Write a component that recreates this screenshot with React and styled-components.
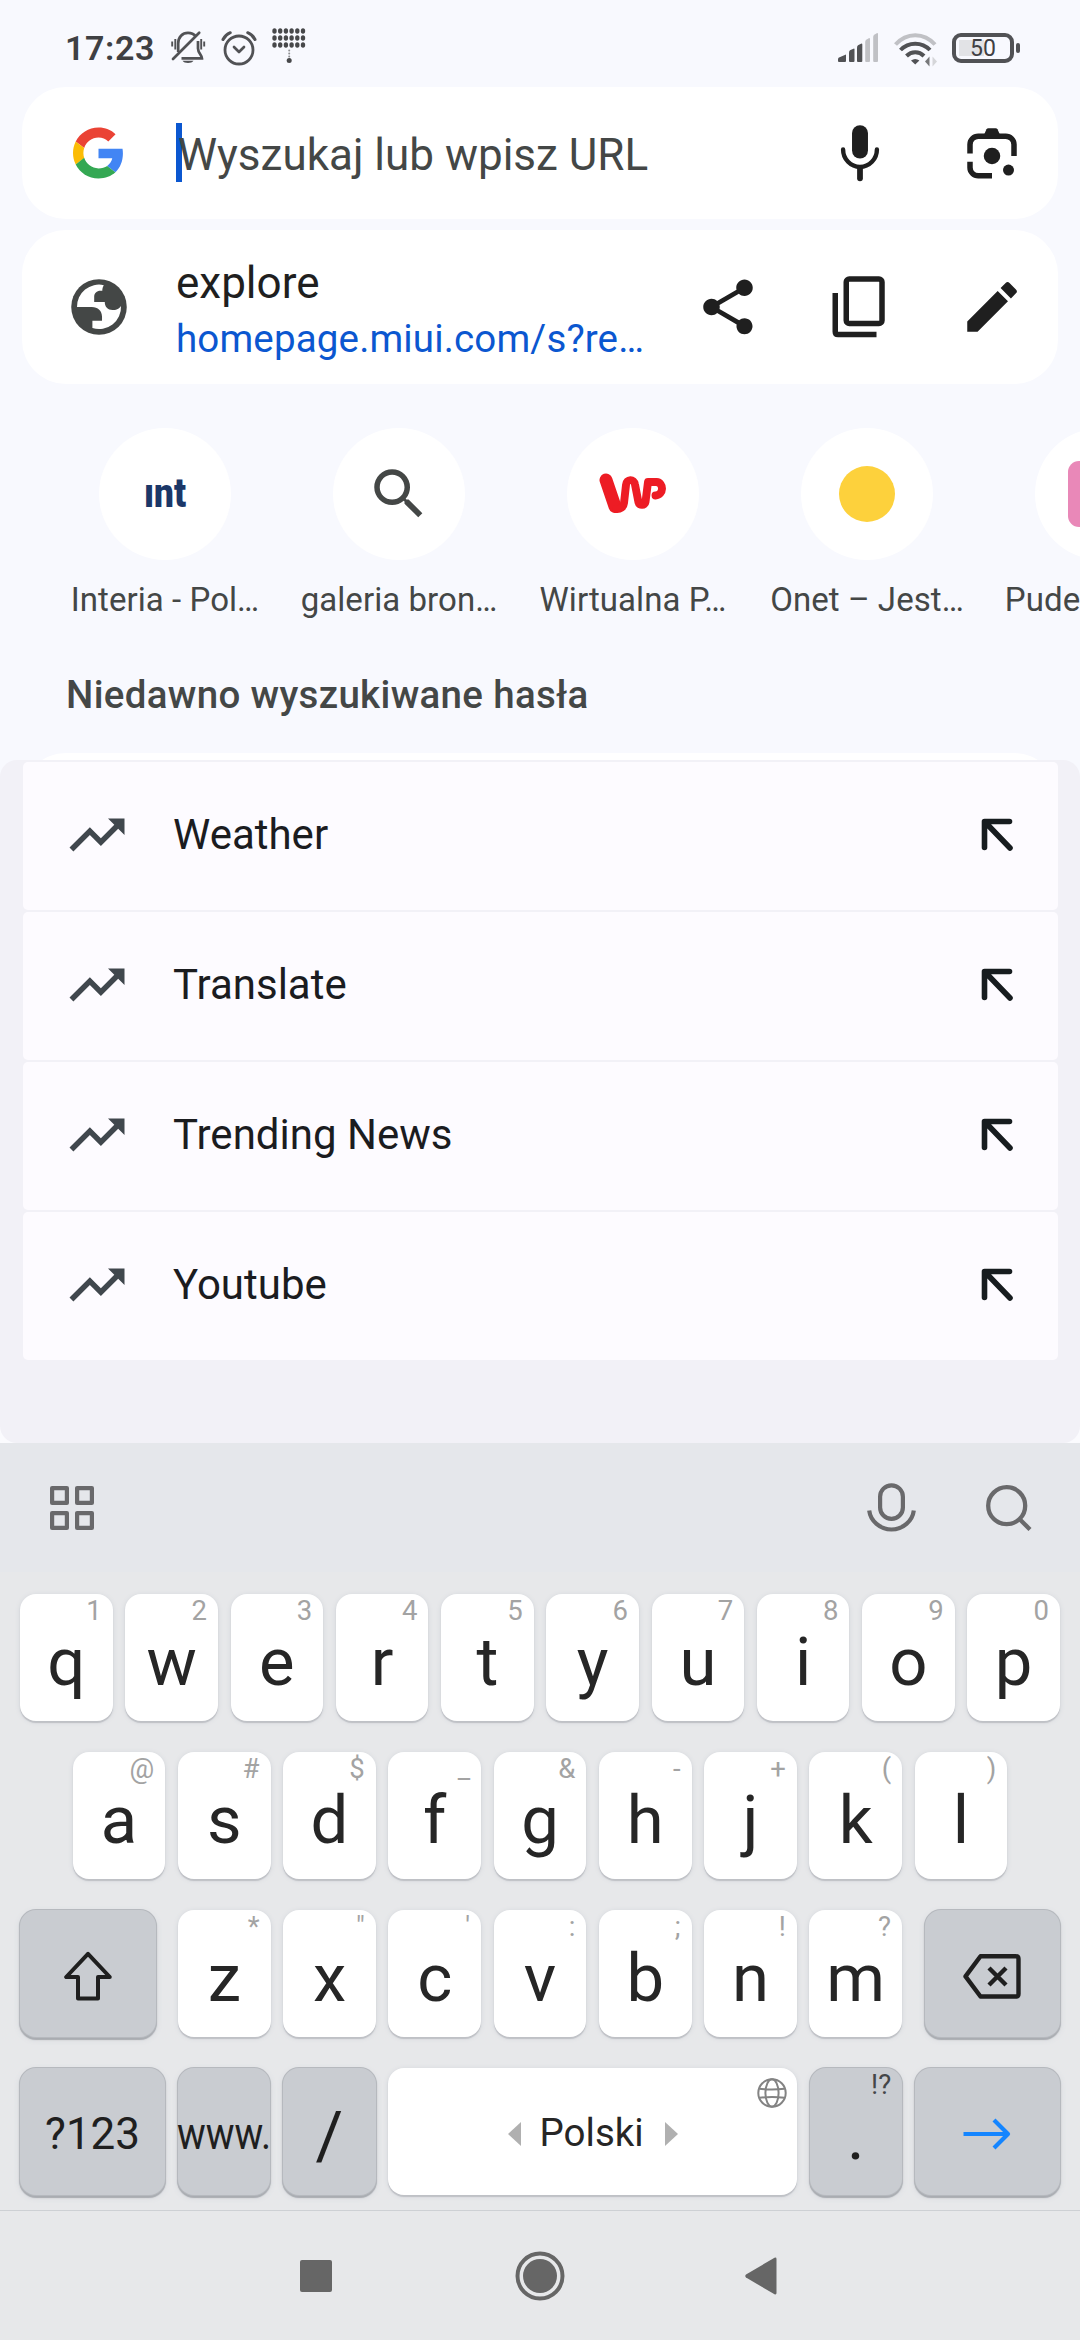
import React from "react";
import styled, { createGlobalStyle } from "styled-components";
import { MdEdit, MdSearch, MdShare, MdTrendingUp } from "react-icons/md";

//data
const tiles = [
  { id: "interia", label: "Interia - Pol…" },
  { id: "search", label: "galeria bron…" },
  { id: "wp", label: "Wirtualna P…" },
  { id: "onet", label: "Onet – Jest…" },
  { id: "pudelek", label: "Pudelek - pl…" },
];

const suggestions = ["Weather", "Translate", "Trending News", "Youtube"];

const firstRow = [
  ["q", "1"], ["w", "2"], ["e", "3"], ["r", "4"], ["t", "5"],
  ["y", "6"], ["u", "7"], ["i", "8"], ["o", "9"], ["p", "0"],
];
const secondRow = [
  ["a", "@"], ["s", "#"], ["d", "$"], ["f", "_"], ["g", "&"],
  ["h", "-"], ["j", "+"], ["k", "("], ["l", ")"],
];
const thirdRow = [
  ["z", "*"], ["x", '"'], ["c", "'"], ["v", ":"],
  ["b", ";"], ["n", "!"], ["m", "?"],
];

//icons
const BellOff = () => (
  <svg width="36" height="36" viewBox="0 0 36 36" fill="none" stroke="#515255" strokeWidth="2.7">
    <path d="M8.2 22V13.5C8.2 7 12.5 2.8 18 2.8c3.2 0 6 1.300 7.800 3.600M28 11v7.500c0 4.500 4 6.500 4 9.900H11.500" />
    <path d="M3 29 29.200 2.800" strokeLinecap="round" />
    <path d="M2.200 11.500v5M5.300 9v10.500M31.200 9v10.500M34.200 11.500v5" strokeWidth="1.900" />
    <path d="M12.500 30.800h11c-1.800 3-9.200 3-11 0z" fill="#515255" stroke="none" />
  </svg>
);

const Alarm = () => (
  <svg width="36" height="36" viewBox="0 0 36 36" fill="none" stroke="#515255" strokeLinecap="round">
    <circle cx="18" cy="20" r="14" strokeWidth="2.800" />
    <path d="m13 17 5 5 5-5" strokeWidth="2.700" strokeLinejoin="round" />
    <path d="M2 9.500C3.500 6.500 6 4 9.300 2.700M34 9.500C32.500 6.500 30 4 26.700 2.700" strokeWidth="3" />
  </svg>
);

const Dots = () => (
  <svg width="34" height="36" viewBox="0 0 34 36" fill="#47484a">
    {[3, 10, 17].map((y) =>
      [2.5, 8.2, 13.900, 19.600, 25.300, 31].map((x) => (
        <ellipse key={`${x}-${y}`} cx={x} cy={y} rx="2.200" ry="2.700" />
      ))
    )}
    <circle cx="17.200" cy="22.500" r="1" opacity="0.6" />
    <circle cx="17.200" cy="25.500" r="1" opacity="0.6" />
    <circle cx="17.200" cy="28.500" r="1" opacity="0.6" />
    <circle cx="17.200" cy="32.500" r="2.500" />
  </svg>
);

const Signal = () => (
  <svg width="42" height="30" viewBox="0 0 42 30" fill="#515255">
    <path d="M0 28v-1.500c0-1 .5-1.500 1-1.900L8 21.500V28q0 1-1 1H1q-1 0-1-1z" />
    <path d="M11 19.500q0-1.500 1-2.200l4-1.800q.5 0 .5 1V28q0 1-1 1H12q-1 0-1-1z" />
    <path d="M19 14.500q0-1.500 1-2.200l3.500-1.800q.8 0 .8 1V28q0 1-1 1H20q-1 0-1-1z" />
    <g fill="#c0c1c5">
      <path d="M27.200 9q0-1.500 1-2.200l3-1.800q.800 0 .800 1V28q0 1-1 1h-2.800q-1 0-1-1z" />
      <path d="M35.200 4q0-1.500 1-2.200l3-1.800q.800 0 .800 1V28q0 1-1 1h-2.800q-1 0-1-1z" />
    </g>
  </svg>
);

const Wifi = () => (
  <svg width="44" height="34" viewBox="0 0 44 34" fill="none" strokeWidth="4" stroke="#515255">
    <path d="M1.500 11.500C12.500-1 30-1 41 11.500" stroke="#c0c1c5" />
    <path d="M6.500 17c8-8.500 21.500-8.500 29.500 0" />
    <path d="M12.500 23c5-5 12.500-5 17.500 0" />
    <path d="M17 27.500q4.200-3 8.400 0l-4.200 4z" fill="#515255" stroke="none" />
    <path d="M35.500 23.500v10l-4.500-5z" fill="#77787a" stroke="none" />
    <path d="M38.500 33.500v-10l4.500 5z" fill="#d5d6d9" stroke="none" />
  </svg>
);

const GoogleG = () => (
  <svg width="51" height="52" viewBox="0 0 48 48">
    <path fill="#EA4335" d="M24 9.500c3.540 0 6.710 1.220 9.210 3.600l6.850-6.850C35.900 2.380 30.470 0 24 0 14.620 0 6.510 5.380 2.560 13.220l7.980 6.190C12.430 13.720 17.740 9.500 24 9.500z" />
    <path fill="#4285F4" d="M46.980 24.550c0-1.570-.15-3.090-.38-4.550H24v9.020h12.940c-.58 2.960-2.260 5.480-4.780 7.180l7.730 6c4.510-4.180 7.090-10.360 7.090-17.650z" />
    <path fill="#FBBC05" d="M10.530 28.590c-.48-1.450-.76-2.990-.76-4.590s.27-3.140.76-4.590l-7.980-6.190C.92 16.460 0 20.120 0 24c0 3.880.92 7.540 2.560 10.780l7.970-6.190z" />
    <path fill="#34A853" d="M24 48c6.480 0 11.930-2.130 15.890-5.810l-7.730-6c-2.150 1.450-4.920 2.300-8.160 2.300-6.260 0-11.570-4.220-13.470-9.910l-7.980 6.190C6.510 42.620 14.620 48 24 48z" />
  </svg>
);

const Mic = () => (
  <svg width="66" height="66" viewBox="0 0 24 24" fill="none" stroke="#1f1f1f" strokeLinecap="round">
    <rect x="9.100" y="1.900" width="5.800" height="12.100" rx="2.900" fill="#1f1f1f" stroke="none" />
    <path d="M5.850 10.700a6.150 6.350 0 0 0 12.300 0" strokeWidth="1.600" />
    <path d="M12 17.500v3.700" strokeWidth="2.100" />
  </svg>
);

const Lens = () => (
  <svg width="66" height="66" viewBox="0 0 24 24" fill="none" stroke="#1f1f1f" strokeWidth="2">
    <path d="M4 12.200V8.900a3 3 0 0 1 3-3h10a3 3 0 0 1 3 3v4.200M4 15.200v2.100a3 3 0 0 0 3 3h5" />
    <path d="M9 5.500 10 3.400q.2-.4.700-.4h2.600q.5 0 .7.400l1 2.100z" fill="#1f1f1f" stroke="none" />
    <circle cx="12" cy="13.100" r="3" fill="#1f1f1f" stroke="none" />
    <circle cx="18" cy="18.200" r="2" fill="#1f1f1f" stroke="none" />
  </svg>
);

const Globe = () => (
  <svg width="66" height="66" viewBox="0 0 24 24">
    <circle cx="12" cy="12" r="10.100" fill="#444746" />
    <path
      fill="#fff"
      d="M4 12H9.400C11.600 12 13.100 13.400 13.100 15.600V17H9.600V19.650A8 8 0 0 0 20 11.600C19.300 12.800 18 13.100 16.900 13.100 15.200 13.100 14.100 12 14.100 10.200H10.250V8.300C10.250 7 11.200 6.100 12.500 6.100H13.200C13.200 5.300 13.400 4.600 13.750 4.060A8 8 0 0 0 4 12z"
    />
  </svg>
);

const Copy = () => (
  <svg width="66" height="66" viewBox="0 0 24 24" fill="none" stroke="#1f1f1f" strokeWidth="2">
    <rect x="7" y="1.800" width="13" height="16.200" rx="1.100" />
    <path d="M3 6.900v14.100q0 1 1 1h14" />
  </svg>
);

const WpLogo = () => (
  <svg width="68" height="42" viewBox="0 0 68 42" fill="none" stroke="#ed1c24" strokeLinecap="round" strokeLinejoin="round">
    <path d="M7 7 16 33.500" strokeWidth="13" />
    <path
      d="M17 36C21 36.500 24.500 34.500 25 30L27 12C27.600 5.600 35 5.600 36 11.500L39.500 29.500C40.200 32.800 46 32.800 46.500 29L49 9H57.500C65 9.500 65 22 56.500 22.500"
      strokeWidth="7.900"
    />
  </svg>
);

const IntLogo = () => (
  <svg width="50" height="50" viewBox="-4 -10 50 50">
    <text
      x="0"
      y="28"
      textLength="42"
      lengthAdjust="spacingAndGlyphs"
      fill="#1b3768"
      fontFamily="Roboto, sans-serif"
      fontWeight="900"
      fontSize="41"
    >
      ınt
    </text>
  </svg>
);

const InsertArrow = () => (
  <svg width="33" height="34" viewBox="0 0 33 34" fill="none" stroke="#171c1f" strokeWidth="5.600" strokeLinecap="round" strokeLinejoin="round">
    <path d="M28.500 3.500H3.500V29.500M4 4 29 30" />
  </svg>
);

const GridIcon = () => (
  <svg width="44" height="44" viewBox="0 0 44 44" fill="none" stroke="#69696b" strokeWidth="4.200" strokeLinejoin="round">
    <path d="M2.100 2.100h14.800v14.800H2.100zM27.100 2.100h14.800v14.800H27.100zM2.100 27.100h14.800v14.800H2.100zM27.100 27.100h14.800v14.800H27.100z" />
  </svg>
);

const OutlineMic = () => (
  <svg width="49" height="49" viewBox="0 0 49 49" fill="none" stroke="#69696b" strokeWidth="4.200">
    <rect x="13.100" y="2.300" width="22.800" height="33.600" rx="11.400" />
    <path d="M2.200 27.500C3.500 38 13 46.500 24.500 46.500S45.500 38 46.800 27.500" />
  </svg>
);

const OutlineSearch = () => (
  <svg width="46" height="46" viewBox="0 0 46 46" fill="none" stroke="#69696b" strokeWidth="4.300">
    <circle cx="20.700" cy="20.700" r="18.500" />
    <path d="m34 34.500 10 10" />
  </svg>
);

const Shift = () => (
  <svg width="50" height="50" viewBox="0 0 50 50" fill="none" stroke="#1f1f1f" strokeWidth="4" strokeLinejoin="round">
    <path d="M25 2.800 3.200 26H15V47.500H35V26H46.800z" />
  </svg>
);

const Backspace = () => (
  <svg width="58" height="45" viewBox="0 0 58 45" fill="none" stroke="#1f1f1f" strokeWidth="4.400" strokeLinejoin="round">
    <path d="M17.500 2.300H53q2.500 0 2.500 2.500V40q0 2.500-2.500 2.500H17.500L2.500 22.400z" />
    <path d="m26 14 17 17M43 14 26 31" />
  </svg>
);

const WireGlobe = () => (
  <svg width="30" height="30" viewBox="0 0 30 30" fill="none" stroke="#838383" strokeWidth="2">
    <circle cx="15" cy="15" r="13.700" />
    <ellipse cx="15" cy="15" rx="6.600" ry="13.700" />
    <path d="M2.500 10.800q12.500 1.600 25 0M2.500 19.800q12.500-1.600 25 0" />
  </svg>
);

const GoArrow = () => (
  <svg width="48" height="32" viewBox="0 0 48 32" fill="none" stroke="#1485ff" strokeWidth="4.200">
    <path d="M.5 16H45" />
    <path d="M31 2 45 16 31 30" strokeLinejoin="round" />
  </svg>
);

const TileIcon = ({ id }) => {
  if (id === "interia") return <IntLogo />;
  if (id === "search") return <MdSearch size={66} color="#444746" />;
  if (id === "wp") return <WpLogo />;
  if (id === "onet") return <Sun />;
  return <PinkSquare />;
};

const Keys = ({ keys }) =>
  keys.map(([letter, hint]) => (
    <LetterKey key={letter}>
      {letter}
      <Hint>{hint}</Hint>
    </LetterKey>
  ));

const App = () => {
  return (
    <StyledApp>
      <GlobalStyle />
      <StatusBar>
        <div className="left">
          <span className="time">17:23</span>
          <BellOff />
          <Alarm />
          <Dots />
        </div>
        <div className="right">
          <Signal />
          <Wifi />
          <Battery>50</Battery>
        </div>
      </StatusBar>

      <SearchCard>
        <IconSlot>
          <GoogleG />
        </IconSlot>
        <SearchInput>Wyszukaj lub wpisz URL</SearchInput>
        <Actions>
          <Mic />
          <Lens />
        </Actions>
      </SearchCard>

      <PageCard>
        <IconSlot>
          <Globe />
        </IconSlot>
        <PageInfo>
          <p className="title">explore</p>
          <p className="url">homepage.miui.com/s?re…</p>
        </PageInfo>
        <Actions>
          <MdShare size={66} />
          <Copy />
          <MdEdit size={66} />
        </Actions>
      </PageCard>

      <Tiles>
        {tiles.map(({ id, label }) => (
          <Tile key={id}>
            <div className="circle">
              <TileIcon id={id} />
            </div>
            <span>{label}</span>
          </Tile>
        ))}
      </Tiles>

      <Heading>Niedawno wyszukiwane hasła</Heading>
      <CardEdge />

      <SheetWrap>
        <Sheet>
          {suggestions.map((text) => (
            <Suggestion key={text}>
              <MdTrendingUp size={66} color="#40474d" />
              <span>{text}</span>
              <InsertArrow />
            </Suggestion>
          ))}
        </Sheet>
      </SheetWrap>

      <KeyboardBar>
        <GridIcon />
        <div>
          <OutlineMic />
          <OutlineSearch />
        </div>
      </KeyboardBar>
      <Keyboard>
        <KeyRow>
          <Keys keys={firstRow} />
        </KeyRow>
        <KeyRow>
          <Keys keys={secondRow} />
        </KeyRow>
        <KeyRow $spread>
          <FunctionKey $width={135.5}>
            <Shift />
          </FunctionKey>
          <KeyGroup>
            <Keys keys={thirdRow} />
          </KeyGroup>
          <FunctionKey $width={135.5}>
            <Backspace />
          </FunctionKey>
        </KeyRow>
        <KeyRow>
          <FunctionKey $width={145.2}>?123</FunctionKey>
          <FunctionKey $width={92.6}>
            <Squeezed>www.</Squeezed>
          </FunctionKey>
          <FunctionKey $width={92.6} $letter>
            /
          </FunctionKey>
          <SpaceKey>
            <Triangle />
            Polski
            <Triangle $right />
            <span className="globe">
              <WireGlobe />
            </span>
          </SpaceKey>
          <FunctionKey $width={92.6} $letter>
            .<Hint $dark>!?</Hint>
          </FunctionKey>
          <FunctionKey $width={145.2}>
            <GoArrow />
          </FunctionKey>
        </KeyRow>
      </Keyboard>

      <NavBar>
        <svg width="32" height="32" viewBox="0 0 32 32" fill="#666">
          <rect width="32" height="32" rx="2" />
        </svg>
        <svg width="50" height="50" viewBox="0 0 50 50">
          <circle cx="25" cy="25" r="22.500" fill="none" stroke="#666" strokeWidth="4" />
          <circle cx="25" cy="25" r="17" fill="#666" />
        </svg>
        <svg width="32" height="38" viewBox="0 0 32 38" fill="#666">
          <path d="M1 17.500 29.500.7Q31.500 0 31.500 2V36q0 2-2 1.300L1 20.500Q-.5 19 1 17.500z" />
        </svg>
      </NavBar>
    </StyledApp>
  );
};

//styles
const GlobalStyle = createGlobalStyle`
  * {
    box-sizing: border-box;
  }
  body {
    margin: 0;
    background: #f8f9fe;
  }
  p {
    margin: 0;
  }
  svg {
    display: block;
    flex-shrink: 0;
  }
`;

const StyledApp = styled.div`
  width: 1080px;
  height: 2340px;
  display: flex;
  flex-direction: column;
  overflow: hidden;
  background: #f8f9fe;
  color: #1f1f1f;
  font-family: Roboto, sans-serif;
  > * {
    flex-shrink: 0;
  }
`;

const StatusBar = styled.div`
  height: 87px;
  display: flex;
  justify-content: space-between;
  padding: 0 60px 0 65px;
  .left {
    display: flex;
    align-items: flex-start;
    padding-top: 30px;
    svg {
      margin-right: 15px;
    }
    svg + svg + svg {
      margin-top: -2px;
    }
  }
  .time {
    width: 105px;
    color: #3f4043;
    font-size: 34px;
    font-weight: 600;
    line-height: 36px;
    letter-spacing: 0.6px;
  }
  .right {
    display: flex;
    align-items: flex-start;
    gap: 14px;
    padding-top: 33px;
  }
`;

const Battery = styled.div`
  position: relative;
  width: 62px;
  height: 30px;
  margin-right: 6px;
  border: 4px solid #515255;
  border-radius: 9px;
  background: linear-gradient(#e2e3e6, #e2e3e6) 3px 3px / 25px 16px no-repeat;
  color: #3f4043;
  font-size: 23px;
  line-height: 24px;
  text-align: center;
  &::after {
    content: "";
    position: absolute;
    right: -10px;
    top: 6px;
    width: 4px;
    height: 10px;
    border-radius: 2px;
    background: #515255;
  }
`;

const Card = styled.div`
  width: 1036px;
  display: flex;
  align-items: center;
  margin: 0 22px;
  padding-right: 33px;
  border-radius: 44px;
  background: #fff;
`;

const SearchCard = styled(Card)`
  height: 132px;
`;

const PageCard = styled(Card)`
  height: 154px;
  margin-top: 11px;
`;

const IconSlot = styled.div`
  width: 154px;
  display: flex;
  justify-content: center;
  svg {
    margin-right: 1px;
  }
`;

const SearchInput = styled.div`
  position: relative;
  flex: 1;
  padding: 4px 0 0 2px;
  color: #444746;
  font-size: 44px;
  line-height: 60px;
  &::before {
    content: "";
    position: absolute;
    z-index: -1;
    left: 0;
    top: 2px;
    width: 6px;
    height: 59px;
    background: #0b57d0;
  }
  z-index: 0;
`;

const PageInfo = styled.div`
  flex: 1;
  padding-top: 7px;
  .title {
    font-size: 44px;
    line-height: 56px;
  }
  .url {
    color: #0b57d0;
    font-size: 38.5px;
    line-height: 55px;
    letter-spacing: 0.15px;
    white-space: nowrap;
  }
`;

const Actions = styled.div`
  display: flex;
  gap: 66px;
`;

const Tiles = styled.div`
  width: 1080px;
  display: flex;
  padding: 44px 0 0 48px;
  overflow: hidden;
`;

const Tile = styled.div`
  width: 234px;
  flex-shrink: 0;
  display: flex;
  flex-direction: column;
  align-items: center;
  .circle {
    width: 132px;
    height: 132px;
    display: flex;
    align-items: center;
    justify-content: center;
    border-radius: 50%;
    background: #fff;
  }
  span {
    margin-top: 20px;
    color: #444746;
    font-size: 33px;
    line-height: 40px;
    letter-spacing: 0.06px;
    white-space: nowrap;
  }
`;

const Sun = styled.div`
  width: 56px;
  height: 56px;
  border-radius: 50%;
  background: #fdd13c;
`;

const PinkSquare = styled.div`
  width: 66px;
  height: 66px;
  border-radius: 11px;
  background: #e988b8;
`;

const Heading = styled.h2`
  height: 133px;
  margin: 0;
  padding: 50px 66px 0;
  color: #444746;
  font-size: 38.5px;
  font-weight: 500;
  line-height: 49px;
  letter-spacing: 0.32px;
`;

// top edge of the recent searches card, the sheet covers the rest
const CardEdge = styled.div`
  height: 7px;
  margin: 0 22px;
  overflow: hidden;
  &::before {
    content: "";
    display: block;
    height: 100px;
    border-radius: 44px;
    background: #fff;
  }
`;

const SheetWrap = styled.div`
  background: linear-gradient(#f8f9fe 50%, #fbfbfe 50%);
`;

const Sheet = styled.div`
  height: 683px;
  display: flex;
  flex-direction: column;
  gap: 2px;
  padding: 2px 22px 0 23px;
  border-radius: 17px;
  background: #f2f1f7;
`;

const Suggestion = styled.div`
  height: 148px;
  display: flex;
  align-items: center;
  padding: 0 44px 3px 41px;
  border-radius: 5px;
  background: #fdfbff;
  span {
    flex: 1;
    padding-left: 43px;
    color: #1b1c1f;
    font-size: 42px;
    line-height: 56px;
  }
`;

const KeyboardBar = styled.div`
  height: 129px;
  display: flex;
  align-items: center;
  justify-content: space-between;
  padding: 0 48px 0 50px;
  background: #e5e7eb;
  div {
    display: flex;
    align-items: center;
    gap: 70px;
  }
`;

const Keyboard = styled.div`
  height: 638px;
  display: flex;
  flex-direction: column;
  gap: 31px;
  padding: 22px 20px 0;
  background: #e7e8ea;
`;

const KeyRow = styled.div`
  width: 1040px;
  height: 127px;
  display: flex;
  justify-content: ${({ $spread }) => ($spread ? "space-between" : "center")};
  gap: ${({ $spread }) => ($spread ? "0" : "12.66px")};
`;

const KeyGroup = styled.div`
  display: flex;
  gap: 12.66px;
`;

const Key = styled.div`
  position: relative;
  height: 127px;
  display: flex;
  align-items: center;
  justify-content: center;
  border-radius: 16px;
  line-height: 1;
`;

const LetterKey = styled(Key)`
  width: 92.6px;
  padding-top: 9px;
  background: #fff;
  box-shadow: 0 2px 1px #bfc1c6, 0 1px 5px #cfd2d8;
  color: #262626;
  font-size: 67px;
`;

const SpaceKey = styled(Key)`
  flex: 1;
  padding-top: 4px;
  background: #fff;
  box-shadow: 0 2px 1px #bfc1c6, 0 1px 5px #cfd2d8;
  color: #262626;
  font-size: 38.5px;
  .globe {
    position: absolute;
    top: 10px;
    right: 10px;
  }
`;

const FunctionKey = styled(Key)`
  width: ${({ $width }) => $width}px;
  padding-top: ${({ $letter }) => ($letter ? "9px" : "5px")};
  background: #c9ccd1;
  box-shadow: 0 0 0 1px #b6b9be, 0 2px 1px 1px #a9acb1, 0 2px 6px #cfd2d8;
  color: #1f1f1f;
  font-size: ${({ $letter }) => ($letter ? "67px" : "44px")};
`;

const Hint = styled.span`
  position: absolute;
  top: 0;
  right: 11px;
  color: ${({ $dark }) => ($dark ? "#444648" : "#a3a3a3")};
  font-size: 27.5px;
  line-height: 33px;
`;

const Squeezed = styled.span`
  transform: scaleX(0.87);
`;

const Triangle = styled.i`
  width: 0;
  height: 0;
  margin: ${({ $right }) => ($right ? "0 0 0 21px" : "0 19px 0 0")};
  border-top: 12px solid transparent;
  border-bottom: 12px solid transparent;
  ${({ $right }) =>
    $right ? "border-left: 13px solid #b0b0b0;" : "border-right: 13px solid #b0b0b0;"}
`;

const NavBar = styled.div`
  height: 130px;
  display: flex;
  align-items: center;
  padding-left: 300px;
  border-top: 1px solid #cdd0d4;
  background: #e7e8ea;
  svg:nth-child(2) {
    margin: 0 180px 0 182.5px;
  }
`;

export default App;
